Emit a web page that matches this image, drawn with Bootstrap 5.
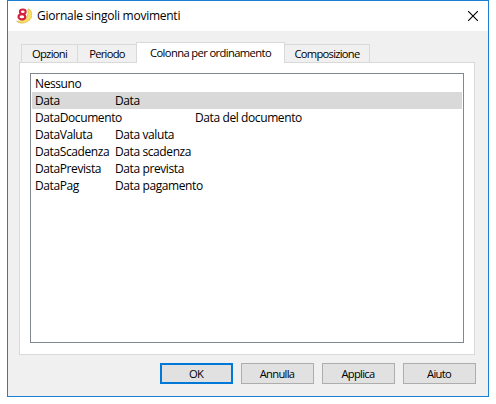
<!DOCTYPE html>
<html lang="it">
<head>
<meta charset="utf-8">
<title>Giornale singoli movimenti</title>
<link href="https://cdn.jsdelivr.net/npm/bootstrap@5.3.0/dist/css/bootstrap.min.css" rel="stylesheet">
<style>
body{background:#fff;color:#000;font:12px/17px "Open Sans","Noto Sans",sans-serif;overflow:hidden}
.dialog{width:482px;height:397px;margin-left:7px;border:1px solid #1a80d5;background:#f0f0f0}
.titlebar{height:30px;padding:0 10px 0 8px;background:#fff}
.emblem{margin-top:-1px}
.caption{margin:-1px 0 0 5px;letter-spacing:-.25px}
.tabs{height:21px;margin:11px 0 -1px 13px;position:relative}
.tabs .tab{height:19px;border:1px solid #d9d9d9;background:#f0f0f0;font:11.2px/18px "Open Sans","Noto Sans",sans-serif;letter-spacing:-.72px;color:#000;padding:0;border-radius:0}
.tabs .tab.active{height:21px;background:#fff;border-bottom:0;letter-spacing:-.61px}
.w1{width:57px}.tabs .w2{width:60px;margin-left:-1px}.tabs .w3{width:149px;margin-left:-1px}.w4{width:85px;border-left:0!important}
.panel{width:456px;height:293px;margin-left:11px;border:1px solid #d9d9d9;background:#fff;padding:10px}
.listing{width:434px;height:270px;border:1px solid #828790;padding:1px}
.entry{height:17px;padding-left:3px;white-space:pre;letter-spacing:-.4px}
.entry.selected{background:#d9d9d9}
.key{width:80px}.key.wide{width:160px}
.actions{margin:8px 12px 0 0;gap:8px}
.push{width:73px;height:21px;padding:0 1px 0 0;border:1px solid #adadad;border-radius:0;background:#e1e1e1;color:#000;font:11.2px/19px "Open Sans","Noto Sans",sans-serif;letter-spacing:-.72px}
.push.default{border:2px solid #0078d7;line-height:17px}
</style>
</head>
<body>
<main class="dialog">
<header class="titlebar d-flex align-items-center">
<svg class="emblem" width="16" height="16" viewBox="0 0 16 16"><path d="M13 .8C17.3 4.5 16.6 10.5 12 13.3C8.5 15.8 3 15.7 .6 13.2C5 13.3 8.5 12.6 10.4 9.6C12.3 6.8 12.3 3.5 11.7 1.5Z" fill="#f7e063" stroke="#c9a53c" stroke-width=".5"/><ellipse cx="6.8" cy="3.7" rx="2.9" ry="2.3" fill="#fff" stroke="#d8203a" stroke-width="2"/><ellipse cx="5.9" cy="8.8" rx="3.4" ry="2.6" fill="#fff" stroke="#d8203a" stroke-width="2.1"/></svg>
<span class="caption">Giornale singoli movimenti</span>
<svg class="ms-auto" width="10" height="10" viewBox="0 0 10 10"><path d="M0 0l10 10M10 0l-10 10" stroke="#000" stroke-width="1.1"/></svg>
</header>
<div class="tabs d-flex align-items-end" role="tablist">
<button class="tab w1">Opzioni</button><button class="tab w2">Periodo</button><button class="tab active w3">Colonna per ordinamento</button><button class="tab w4">Composizione</button>
</div>
<section class="panel">
<div class="listing">
<div class="entry d-flex"><span class="key">Nessuno</span></div>
<div class="entry selected d-flex"><span class="key">Data</span><span>Data</span></div>
<div class="entry d-flex"><span class="key wide">DataDocumento</span><span>Data del documento</span></div>
<div class="entry d-flex"><span class="key">DataValuta</span><span>Data valuta</span></div>
<div class="entry d-flex"><span class="key">DataScadenza</span><span>Data scadenza</span></div>
<div class="entry d-flex"><span class="key">DataPrevista</span><span>Data prevista</span></div>
<div class="entry d-flex"><span class="key">DataPag</span><span>Data pagamento</span></div>
</div>
</section>
<footer class="actions d-flex justify-content-end"><button class="push default">OK</button><button class="push">Annulla</button><button class="push">Applica</button><button class="push">Aiuto</button></footer>
</main>
<script src="https://cdn.jsdelivr.net/npm/bootstrap@5.3.0/dist/js/bootstrap.bundle.min.js"></script>
</body>
</html>
